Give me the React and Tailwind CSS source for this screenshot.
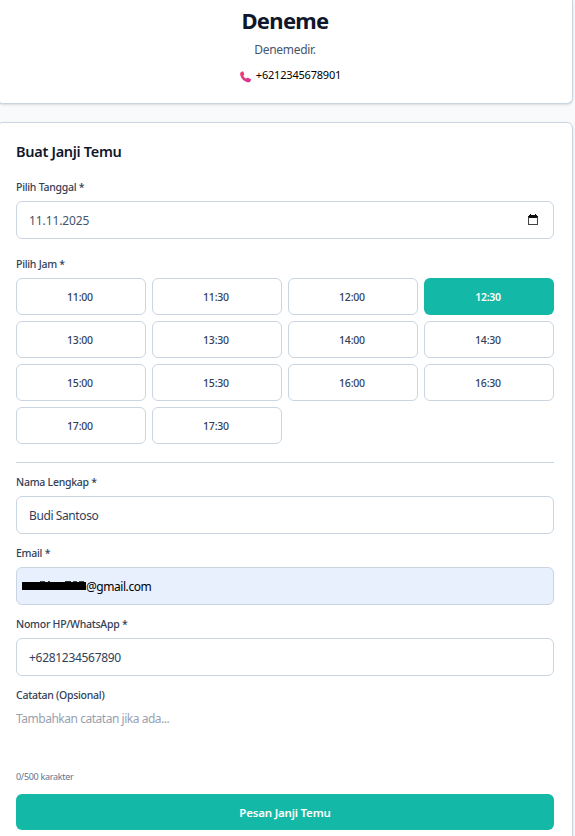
import React from "react";

const slots = [
  "11:00", "11:30", "12:00", "12:30",
  "13:00", "13:30", "14:00", "14:30",
  "15:00", "15:30", "16:00", "16:30",
  "17:00", "17:30",
];

function Label({ children, className }) {
  return (
    <label className={`block h-[14px] text-[10.5px] leading-[14px] font-medium tracking-[-0.26px] whitespace-nowrap text-slate-700 ${className}`}>
      {children}
    </label>
  );
}

function Field({ children, className }) {
  return (
    <div className={`flex h-[38px] items-center rounded-md border border-slate-300 pt-[2px] text-[12px] ${className}`}>
      {children}
    </div>
  );
}

function Phone() {
  return (
    <svg width="12" height="12" viewBox="0 0 12 12" className="mt-[3px]">
      <defs>
        <linearGradient id="phone" x1="0" y1="0" x2="1" y2="1">
          <stop offset="0" stopColor="#ec4069" />
          <stop offset="1" stopColor="#d6309a" />
        </linearGradient>
      </defs>
      <path
        fill="url(#phone)"
        d="M.6 1.500 2.200.5c.6-.3 1.100-.1 1.300.5l.7 1.900c.2.6 0 1-.4 1.300l-.5.5c.6 1.400 1.600 2.300 3 2.900l.7-.5c.4-.4.900-.5 1.400-.2l2.100 1.100c.5.3.7.8.4 1.300l-.8 1.400c-.3.4-.7.6-1.300.6C4.500 11.200.4 7.400.1 2.700 0 2.200.2 1.800.6 1.500Z"
      />
    </svg>
  );
}

function Calendar() {
  return (
    <svg width="10" height="11" viewBox="0 0 10 11" shapeRendering="crispEdges" className="-mt-[3px]">
      <path fill="#111" d="M1 1h1V0h1v1h4V0h1v1h1v1h1v2H0V2h1z" />
      <path fill="none" stroke="#444" d="M.5 3v7.500h9V3" />
    </svg>
  );
}

export default function App() {
  return (
    <div className="h-[836px] w-[575px] overflow-hidden bg-slate-50 font-['Noto_Sans',sans-serif]">
      <div className="-ml-[3px] flex w-[576px] flex-col gap-[18px]">
        <header className="flex h-[104px] flex-col items-center rounded-b-md border border-t-0 border-slate-300 bg-white pt-[6px] shadow-sm">
          <h1 className="h-7 text-[22px] leading-7 font-bold tracking-[-0.7px] whitespace-nowrap text-slate-900">Deneme</h1>
          <p className="mt-[8px] h-4 text-[12px] leading-4 tracking-[-0.3px] whitespace-nowrap text-slate-600">Denemedir.</p>
          <div className="mt-[9px] flex h-4 items-center gap-1 pl-[11px] text-[11px] leading-4 tracking-[-0.2px] text-black">
            <Phone />
            <span>+6212345678901</span>
          </div>
        </header>

        <main className="flex h-[760px] flex-col rounded-md border border-slate-300 bg-white px-[18px] shadow-sm">
          <h2 className="mt-[18px] h-5 text-[14.5px] leading-5 font-semibold tracking-[-0.3px] whitespace-nowrap text-slate-900">Buat Janji Temu</h2>

          <Label className="mt-[19px]">Pilih Tanggal *</Label>
          <Field className="mt-[7px] justify-between pr-[15px] pl-[12px] tracking-[-0.1px] text-slate-600">
            <span>11.11.2025</span>
            <Calendar />
          </Field>

          <Label className="mt-[18px]">Pilih Jam *</Label>
          <div className="mt-[7px] grid grid-cols-4 gap-[6px]">
            {slots.map((slot) => (
              <button
                key={slot}
                className={
                  slot === "12:30"
                    ? "h-[37px] rounded-md bg-[#14b8a6] pt-[2px] pr-[2px] text-[10.5px] font-semibold tracking-[-0.3px] text-white"
                    : "h-[37px] rounded-md border border-slate-300 bg-white pt-[2px] pr-[2px] text-[10.5px] font-medium tracking-[-0.2px] text-slate-700"
                }
              >
                {slot}
              </button>
            ))}
          </div>

          <div className="mt-[18px] h-px bg-slate-300" />

          <Label className="mt-[12px]">Nama Lengkap *</Label>
          <Field className="mt-[7px] pl-[12px] tracking-[-0.4px] text-slate-700">Budi Santoso</Field>

          <Label className="mt-[12px]">Email *</Label>
          <Field className="mt-[7px] bg-[#e8f0fe] pl-[5px] tracking-[-0.45px] text-black">
            <span className="-mt-[4px] flex h-[10px] w-[64px] flex-col">
              <span className="flex h-[2px] items-end">
                <span className="ml-[18px] h-px w-[5px] bg-black/70" />
                <span className="ml-[3px] h-px w-[2px] bg-black/70" />
                <span className="ml-[15px] h-px w-[6px] bg-black/80" />
                <span className="ml-[2px] h-px w-[4px] bg-black/70" />
                <span className="ml-[2px] h-px w-[5px] bg-black/70" />
              </span>
              <span className="h-[8px] bg-black" />
            </span>
            <span>@gmail.com</span>
          </Field>

          <Label className="mt-[12px]">Nomor HP/WhatsApp *</Label>
          <Field className="mt-[7px] pl-[12px] tracking-[-0.3px] text-slate-700">+6281234567890</Field>

          <Label className="mt-[12px]">Catatan (Opsional)</Label>
          <p className="mt-[9px] h-4 text-[12px] leading-4 tracking-[-0.47px] text-gray-400">Tambahkan catatan jika ada...</p>
          <p className="mt-[44px] h-3 text-[9px] leading-3 tracking-[-0.3px] text-slate-500">0/500 karakter</p>

          <button className="mt-[11px] h-9 shrink-0 rounded-md bg-[#14b8a6] pt-[2px] text-[11.5px] font-semibold tracking-[-0.2px] text-white">
            Pesan Janji Temu
          </button>
        </main>
      </div>
    </div>
  );
}
